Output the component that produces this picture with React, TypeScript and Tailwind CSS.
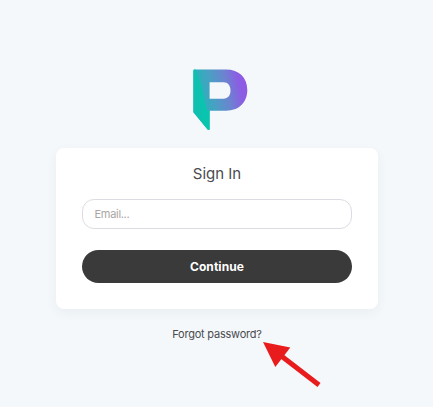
import { useState } from "react";

function Logo() {
  return (
    <svg width="60" height="64" viewBox="0 0 60 64" className="shrink-0">
      <defs>
        <linearGradient id="bowl" x1="8" y1="24" x2="56" y2="14" gradientUnits="userSpaceOnUse">
          <stop offset="0" stopColor="#25b4b8" />
          <stop offset="0.3" stopColor="#4a9fc4" />
          <stop offset="0.6" stopColor="#6c83d0" />
          <stop offset="0.85" stopColor="#8a5ee3" />
          <stop offset="1" stopColor="#9257e6" />
        </linearGradient>
        <linearGradient id="stem" x1="4" y1="0" x2="20" y2="0" gradientUnits="userSpaceOnUse">
          <stop offset="0" stopColor="#10bfb0" />
          <stop offset="1" stopColor="#06c7ae" />
        </linearGradient>
      </defs>
      <path
        fillRule="evenodd"
        fill="url(#bowl)"
        d="M4.5 1.5H36C49 1.5 57.3 9.5 57.3 22S49 42.7 36 42.7H19.6V61.8H17.8L3.4 44.3V2.6Q3.4 1.5 4.5 1.5ZM19.6 14.3V30.7H33.4C38 30.7 40.5 27.3 40.5 22.5S38 14.3 33.4 14.3Z"
      />
      <path
        fill="url(#stem)"
        d="M3.4 2.6Q3.4 1.5 4.5 1.5H5.5L11.5 18L17 42.7H19.6V61.8H17.8L3.4 44.3Z"
      />
    </svg>
  );
}

export default function App() {
  const [email, setEmail] = useState("");

  return (
    <main className="relative flex h-[407px] w-[433px] flex-col items-center overflow-hidden bg-[#f4f8fb] pt-[68px] pr-px font-['Inter',sans-serif]">
      {/* Logo */}
      <div className="mb-4 flex w-full justify-center pl-[7px]">
        <Logo />
      </div>

      {/* Sign in card */}
      <form
        onSubmit={(e) => e.preventDefault()}
        className="ml-[2px] flex h-[161px] w-[322px] shrink-0 flex-col rounded-lg bg-white px-[26px] pt-4 shadow-[0_4px_12px_rgba(40,60,80,0.05)]"
      >
        <h1 className="h-[35px] text-center text-[15px] leading-5 text-[#4b4b4f]">
          Sign In
        </h1>
        <input
          type="text"
          placeholder="Email..."
          value={email}
          onChange={(e) => setEmail(e.target.value)}
          className="h-[30px] w-full rounded-xl border border-[#dcdce4] px-[11.5px] pb-px text-[11px] tracking-[-0.3px] text-[#4b4b4f] outline-none placeholder:text-[#aaa6a4]"
        />
        <button
          type="submit"
          className="mt-[21px] h-[33px] w-full rounded-full bg-[#3a3a3a] text-xs font-bold tracking-[0.08px] text-white"
        >
          Continue
        </button>
      </form>

      <a
        href="#"
        className="mt-[17px] ml-[2px] text-[11px] leading-4 tracking-[-0.22px] text-[#4b4b4f]"
      >
        Forgot password?
      </a>

      {/* Arrow pointing at the link */}
      <svg
        width="60"
        height="48"
        viewBox="0 0 60 48"
        className="pointer-events-none absolute top-[340px] left-[262px]"
      >
        <path d="M1 2L28.3 7.5L13.3 27Z" fill="#e81c1c" />
        <path d="M20 16.5L57 45" stroke="#e81c1c" strokeWidth="5" />
      </svg>
    </main>
  );
}
